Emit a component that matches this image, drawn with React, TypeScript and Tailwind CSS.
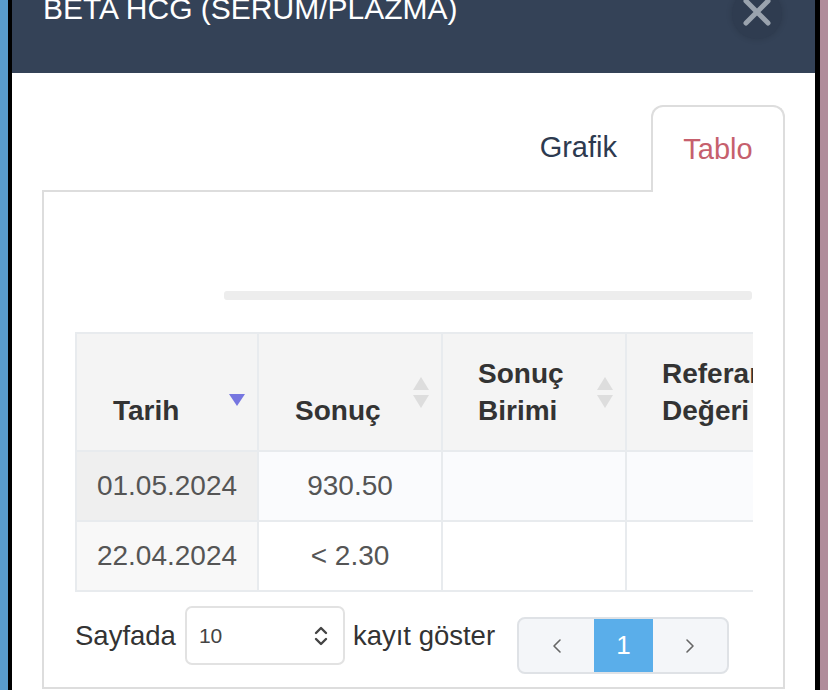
import { ChevronLeft, ChevronRight, ChevronsUpDown } from "lucide-react"

const font = "font-['Liberation_Sans',Arial,sans-serif]"

const SortBoth = () => (
    <svg width="16" height="31" viewBox="0 0 16 31" className="absolute right-[12px] top-[43px]">
        <path d="M8 0 L16 13 L0 13 Z" fill="#dddddd" />
        <path d="M8 31 L16 18 L0 18 Z" fill="#dddddd" />
    </svg>
)

const SortDown = () => (
    <svg width="16" height="12" viewBox="0 0 16 12" className="absolute right-[12px] top-[60px]">
        <path d="M0 0 L16 0 L8 12 Z" fill="#7676e0" />
    </svg>
)

const rows = [
    { date: "01.05.2024", value: "930.50", first: "bg-[#efefef]", rest: "bg-[#fafbfd]" },
    { date: "22.04.2024", value: "< 2.30", first: "bg-[#f8f8f8]", rest: "bg-white" },
]

export default function App() {
    return (
        <div className={`w-[828px] h-[690px] flex overflow-hidden ${font}`}>
            <div className="w-[8px] bg-[#5a9ccc]" />
            <div className="w-[4px] bg-black" />
            <div className="flex-1 flex flex-col bg-white overflow-hidden">
                {/* modal header */}
                <div className="relative h-[73px] shrink-0 bg-[#344257] pl-[31px]">
                    <h2 className="-mt-[6px] text-[30px] leading-[30px] text-white">BETA HCG (SERUM/PLAZMA)</h2>
                    <div className="absolute right-[33px] -top-[11px] w-[50px] h-[50px] rounded-full bg-[#2f3c50] shadow-[0_0_6px_rgba(0,0,0,0.15)] flex items-start justify-center">
                        <svg width="28" height="28" viewBox="0 0 28 28" className="mt-[9px]">
                            <path d="M3 3 L25 25 M25 3 L3 25" stroke="#9aa3ae" strokeWidth="5" strokeLinecap="round" />
                        </svg>
                    </div>
                </div>

                <div className="flex-1 px-[30px] pt-[32px]">
                    {/* tabs */}
                    <div className="flex justify-end h-[85px]">
                        <div className="pl-[32px] pr-[34px] flex items-center text-[29px] text-[#2d3a4f]">Grafik</div>
                        <div className="relative z-10 -mb-[2px] w-[134px] flex items-center justify-center rounded-t-[12px] border-2 border-b-0 border-[#dddddd] bg-white text-[29px] text-[#c6606d]">
                            Tablo
                        </div>
                    </div>

                    {/* panel */}
                    <div className="border-2 border-[#dddddd] h-[499px] px-[31px]">
                        <div className="ml-[149px] mt-[99px] h-[9px] rounded-[3px] bg-[#ededed]" />

                        <div className="mt-[32px] w-[678px] overflow-hidden">
                            <table className="border-collapse border-2 border-[#e8ebee] table-fixed w-[900px]">
                                <colgroup>
                                    <col className="w-[182px]" />
                                    <col className="w-[184px]" />
                                    <col className="w-[184px]" />
                                    <col className="w-[184px]" />
                                    <col className="w-[166px]" />
                                </colgroup>
                                <thead>
                                    <tr className="h-[118px] bg-[#f4f4f4] text-[28px] leading-[37px] font-bold text-[#333]">
                                        <th className="relative align-bottom text-left pl-[36px] pb-[21px] border-2 border-[#e8ebee]">
                                            Tarih
                                            <SortDown />
                                        </th>
                                        <th className="relative align-bottom text-left pl-[36px] pb-[21px] border-2 border-[#e8ebee]">
                                            Sonuç
                                            <SortBoth />
                                        </th>
                                        <th className="relative align-bottom text-left pl-[35px] pb-[21px] border-2 border-[#e8ebee]">
                                            Sonuç<br />Birimi
                                            <SortBoth />
                                        </th>
                                        <th className="relative align-bottom text-left pl-[35px] pb-[21px] border-2 border-[#e8ebee] whitespace-nowrap">
                                            Referans<br />Değeri
                                        </th>
                                        <th className="border-2 border-[#e8ebee]" />
                                    </tr>
                                </thead>
                                <tbody className="text-[28px] text-[#555]">
                                    {rows.map((r) => (
                                        <tr key={r.date} className="h-[70px]">
                                            <td className={`text-center border-2 border-[#e8ebee] ${r.first}`}>{r.date}</td>
                                            <td className={`text-center border-2 border-[#e8ebee] ${r.rest}`}>{r.value}</td>
                                            <td className={`border-2 border-[#e8ebee] ${r.rest}`} />
                                            <td className={`border-2 border-[#e8ebee] ${r.rest}`} />
                                            <td className={`border-2 border-[#e8ebee] ${r.rest}`} />
                                        </tr>
                                    ))}
                                </tbody>
                            </table>
                        </div>

                        {/* footer */}
                        <div className="mt-[14px] flex items-start text-[27.5px] text-[#333]">
                            <span className="leading-[59px]">Sayfada</span>
                            <div className="ml-[9px] w-[160px] h-[59px] rounded-[7px] border-2 border-[#e2e2e2] flex items-center justify-between pl-[12px] pr-[10px]">
                                <span className="text-[21px] text-[#444]">10</span>
                                <ChevronsUpDown size={24} strokeWidth={2.4} color="#444" />
                            </div>
                            <span className="ml-[8px] leading-[59px]">kayıt göster</span>
                            <div className="ml-[22px] mt-[11px] w-[212px] h-[57px] rounded-[8px] border-2 border-[#dfe2e6] bg-[#f4f6f9] flex overflow-hidden">
                                <div className="w-[75px] flex items-center justify-center">
                                    <ChevronLeft size={24} strokeWidth={1.6} color="#666" />
                                </div>
                                <div className="w-[59px] bg-[#5aaeea] flex items-center justify-center text-[26px] text-white">1</div>
                                <div className="flex-1 flex items-center justify-center">
                                    <ChevronRight size={24} strokeWidth={1.6} color="#666" />
                                </div>
                            </div>
                        </div>
                    </div>
                </div>
            </div>
            <div className="w-[5px] bg-black" />
            <div className="w-[8px] bg-[#b08c9a]" />
        </div>
    )
}
